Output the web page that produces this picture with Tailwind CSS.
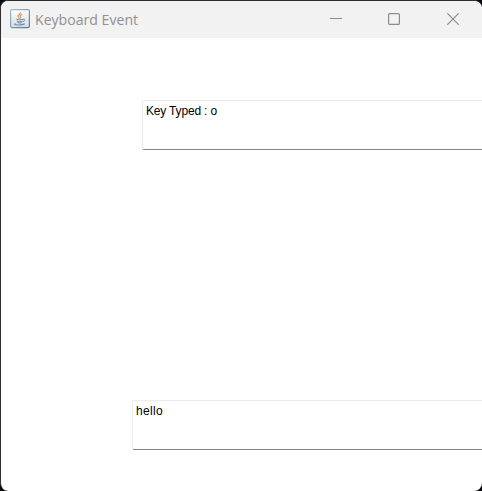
<!DOCTYPE html>
<html lang="en">
<head>
<meta charset="utf-8">
<title>Keyboard Event</title>
<script src="https://cdn.jsdelivr.net/npm/@tailwindcss/browser@4"></script>
</head>
<body class="bg-[#08070c] overflow-hidden">
<div class="w-[482px] h-[491px] overflow-hidden rounded-[8px] border-t border-l border-[#302c36] bg-white flex flex-col">
  <header class="h-[37px] shrink-0 bg-[#f2f2f2] flex items-start pl-[9px]">
    <svg class="w-5 h-5 shrink-0 mt-2" viewBox="0 0 20 20" fill="none">
      <defs><linearGradient id="tile" x2="0" y2="1"><stop stop-color="#fff"/><stop offset="1" stop-color="#d3dbe2"/></linearGradient><linearGradient id="edge" x2="1" y2="1"><stop stop-color="#a5bccb"/><stop offset="1" stop-color="#54799a"/></linearGradient></defs>
      <rect x=".6" y=".6" width="18.8" height="18" rx="1.5" fill="url(#tile)" stroke="url(#edge)" stroke-width="1.2"/>
      <path d="M10.7 3c.8 2-3.4 2.7-2.7 4.6.3.8 1.3 1.1 1.2 2.2M12.2 5.3c-2.4.9-2.6 1.7-1.7 2.6.5.6.1 1.2-.4 1.7" stroke="#e9a064" stroke-width="1.3"/>
      <path d="M6.4 10.3c1.8.6 5 .6 6.8 0M6.8 12.2c2 .6 4 .6 5.8 0M7.4 13.7c1.5.4 3 .4 4.4 0M13 10.3c2.4-.6 2.2 1.8 0 2.3" stroke="#648ba8" stroke-width="1"/>
      <path d="M5.4 14.6c-3.2 1.4 5.8 2.2 9.4.2" stroke="#648ba8" stroke-width="1.1"/>
    </svg>
    <h1 class="mt-2 ml-[5px] w-[280px] text-[15px] leading-[20px] font-['Open_Sans','Noto_Sans',sans-serif] text-[#919191] whitespace-nowrap"><span class="inline-block origin-left scale-x-[0.94]">Keyboard Event</span></h1>
    <div class="flex items-center gap-[46px] ml-[15px] mt-3">
      <svg class="w-3 h-3" viewBox="0 0 12 12"><path d="M0 5.5h12" stroke="#8d8d8d"/></svg>
      <svg class="w-3 h-3" viewBox="0 0 12 12"><rect x=".6" y=".6" width="10.8" height="10.8" rx="1" fill="none" stroke="#8d8d8d" stroke-width="1.2"/></svg>
      <svg class="w-3 h-3 ml-px" viewBox="0 0 12 12"><path d="M.3.3l11.4 11.4M11.7.3L.3 11.7" stroke="#8d8d8d" stroke-width="1.2"/></svg>
    </div>
  </header>
  <main class="flex flex-col pt-[62px] font-['Liberation_Sans',Arial,sans-serif] text-[12px] leading-[14px] text-black">
    <div class="ml-[141px] h-[50px] rounded-l-[2px] border-t border-l border-b border-t-[#ebebeb] border-l-[#ebebeb] border-b-[#868686] pl-[3px] pt-[3px] whitespace-nowrap tracking-[-0.17px]">Key Typed : o</div>
    <div class="mt-[250px] ml-[131px] h-[50px] rounded-l-[2px] border-t border-l border-b border-t-[#ebebeb] border-l-[#ebebeb] border-b-[#868686] pl-[3px] pt-[3px] whitespace-nowrap tracking-[0.3px]">hello</div>
  </main>
</div>
</body>
</html>
